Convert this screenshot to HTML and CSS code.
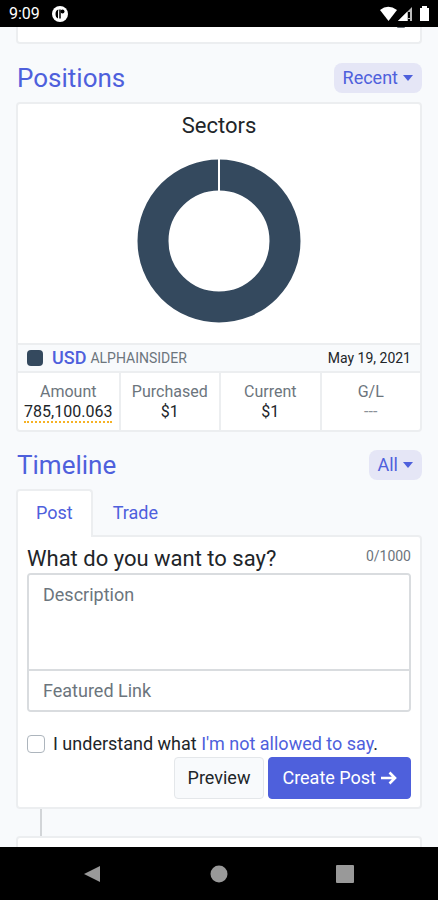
FILE: index.html
```html
<!DOCTYPE html>
<html lang="en">
<head>
<meta charset="utf-8">
<meta name="viewport" content="width=device-width, initial-scale=1">
<title>AlphaInsider</title>
<link rel="stylesheet" href="styles.css">
</head>
<body>
<header class="status">
  <time>9:09</time>
  <svg class="status-app" viewBox="0 0 16 16" aria-hidden="true"><circle cx="8" cy="8" r="8" fill="#fff"/><path d="M6.500 3.500Q3.500 4 3.500 8Q3.500 11.500 6 12.500V5.500" fill="#000"/><path d="M8 3.500V12.500" stroke="#000" stroke-width="1.500"/><circle cx="10.500" cy="5.500" r="2" fill="#000"/></svg>
  <svg class="status-icons" viewBox="0 0 50 16" aria-hidden="true"><path d="M0 4Q8-2.500 17 4L8.500 15Z" fill="#fff"/><path d="M18 15L32 1V15Z" fill="#bbb"/><path d="M18 15L27 6V15Z" fill="#fff"/><path d="M29 6V12M29 13V15" stroke="#000" stroke-width="2"/><path d="M40 2H42V0H47V2H49V15H40Z" fill="#fff"/></svg>
</header>
<main class="page">
  <section class="card card-previous"><span class="dot"></span></section>

  <div class="heading">
    <h2>Positions</h2>
    <button class="pill" type="button">Recent <span class="caret"></span></button>
  </div>
  <section class="card">
    <h3 class="chart-title">Sectors</h3>
    <svg class="chart" viewBox="0 0 164 164" role="img" aria-label="Sectors: USD 100%"><circle cx="82" cy="82" r="66" fill="none" stroke="#34495e" stroke-width="31"/><path d="M82 0V33" stroke="#fff" stroke-width="2"/></svg>
    <div class="asset">
      <span class="swatch"></span>
      <a class="symbol" href="#usd">USD</a>
      <span class="exchange">ALPHAINSIDER</span>
      <time class="date">May 19, 2021</time>
    </div>
    <dl class="stats">
      <div><dt>Amount</dt><dd><span class="hint">785,100.063</span></dd></div>
      <div><dt>Purchased</dt><dd>$1</dd></div>
      <div><dt>Current</dt><dd>$1</dd></div>
      <div><dt>G/L</dt><dd class="muted">---</dd></div>
    </dl>
  </section>

  <div class="heading">
    <h2>Timeline</h2>
    <button class="pill" type="button">All <span class="caret"></span></button>
  </div>
  <nav class="tabs">
    <a class="tab tab-active" href="#post">Post</a>
    <a class="tab" href="#trade">Trade</a>
  </nav>
  <form class="card composer">
    <div class="composer-head">
      <label for="description">What do you want to say?</label>
      <span class="counter">0/1000</span>
    </div>
    <div class="fields">
      <textarea id="description" placeholder="Description"></textarea>
      <input type="text" placeholder="Featured Link" aria-label="Featured Link">
    </div>
    <div class="agree">
      <input type="checkbox" id="agree">
      <label for="agree">I understand what <a href="#rules">I'm not allowed to say</a>.</label>
    </div>
    <div class="actions">
      <button class="btn" type="button">Preview</button>
      <button class="btn btn-primary" type="submit">Create Post
        <svg class="arrow" viewBox="0 0 16 14" aria-hidden="true"><path d="M0 7H14M8.500 1.500L14 7L8.500 12.500" fill="none" stroke="currentColor" stroke-width="2.600"/></svg>
      </button>
    </div>
  </form>
  <div class="connector"></div>
  <section class="card card-next"></section>
</main>
<footer class="navbar">
  <svg viewBox="0 0 18 18" aria-hidden="true"><path d="M1 9L17 1V17Z"/></svg>
  <svg viewBox="0 0 18 18" aria-hidden="true"><circle cx="9" cy="9" r="8.500"/></svg>
  <svg viewBox="0 0 18 18" aria-hidden="true"><rect width="18" height="18" rx="1"/></svg>
</footer>
</body>
</html>
```
FILE: styles.css
```css
* { box-sizing: border-box; }
body {
  margin: 0;
  height: 100vh;
  display: flex;
  flex-direction: column;
  background: #f8fafc;
  color: #212529;
  font-family: Roboto, sans-serif;
  font-size: 18px;
  line-height: 24px;
}
h2, h3, dl, dd { margin: 0; font-weight: 400; }
a { color: #4e60dc; text-decoration: none; }
button, input, textarea { font: inherit; margin: 0; }

.status {
  flex: none;
  height: 27px;
  padding: 0 8px 0 9px;
  display: flex;
  align-items: center;
  background: #000;
  color: #fff;
  font-size: 16px;
}
.status-app { width: 16px; height: 16px; margin-left: 12px; }
.status-icons { width: 50px; height: 16px; margin-left: auto; }

.page {
  flex: 1;
  min-height: 0;
  overflow: hidden;
  padding: 0 16px;
}
.card {
  background: #fff;
  border: 2px solid #eceef0;
  border-radius: 4px;
}
.card-previous { height: 17px; border-top: 0; border-radius: 0 0 4px 4px; }
.dot {
  display: block;
  width: 8px;
  height: 1px;
  margin: 0 15px 0 auto;
  border-radius: 0 0 4px 4px;
  background: #6c757d;
}

.heading {
  display: flex;
  align-items: center;
  justify-content: space-between;
  margin: 18px 0 9px;
  padding-left: 1px;
}
.card-previous + .heading { margin-top: 19px; }
.heading h2 { color: #4e60dc; font-size: 26px; line-height: 30px; }
.pill {
  display: flex;
  align-items: center;
  gap: 5px;
  height: 30px;
  padding: 0 9px;
  border: 0;
  border-radius: 8px;
  background: #e5e6f6;
  color: #4e60dc;
}
.caret {
  border: 5px solid transparent;
  border-top: 6px solid #4e60dc;
  border-bottom: 0;
}

.chart-title { padding-top: 8px; text-align: center; font-size: 22px; line-height: 28px; }
.chart { display: block; width: 164px; height: 164px; margin: 19px auto 20px; }
.asset {
  display: flex;
  align-items: center;
  height: 30px;
  padding: 0 9px;
  border: solid #eceef0;
  border-width: 2px 0;
  background: #f8fafc;
}
.swatch { width: 16px; height: 16px; border-radius: 4px; background: #34495e; }
.symbol { margin-left: 9px; font-weight: 500; }
.exchange { margin-left: 4px; color: #6c757d; font-size: 14px; }
.date { margin-left: auto; font-size: 14px; }
.stats { display: grid; grid-template-columns: repeat(4, 1fr); }
.stats > div { padding: 9px 0 8px; text-align: center; font-size: 16px; line-height: 20px; }
.stats > div + div { border-left: 2px solid #eceef0; }
.stats dt { color: #6c757d; }
.stats .muted { color: #8a9198; }
.hint { border-bottom: 2px dotted #f5b225; }

.tabs { display: flex; }
.tab { height: 46px; padding: 10px 18px; border: 2px solid transparent; border-bottom: 0; }
.tab-active {
  position: relative;
  height: 48px;
  margin-bottom: -2px;
  border-color: #eceef0;
  border-radius: 4px 4px 0 0;
  background: #fff;
}
.composer { padding: 8px 9px; border-top-left-radius: 0; }
.composer-head { display: flex; justify-content: space-between; font-size: 22px; line-height: 28px; }
.counter { color: #6c757d; font-size: 14px; line-height: 22px; }
.fields { border: 2px solid #d9dcdf; border-radius: 4px; overflow: hidden; }
.fields textarea, .fields input {
  display: block;
  width: 100%;
  padding: 8px 14px;
  border: 0;
  background: #fff;
  color: #212529;
}
.fields textarea { height: 96px; border-bottom: 2px solid #d9dcdf; resize: none; }
.fields input { height: 39px; }
.fields ::placeholder { color: #6c757d; opacity: 1; }
.agree { display: flex; align-items: center; gap: 8px; margin-top: 20px; }
.agree input {
  appearance: none;
  width: 18px;
  height: 18px;
  border: 1px solid #adb5bd;
  border-radius: 4px;
  background: #fff;
}
.actions { display: flex; justify-content: flex-end; gap: 4px; margin-top: 1px; }
.btn {
  display: flex;
  align-items: center;
  gap: 5px;
  height: 42px;
  padding: 0 13px;
  border: 1px solid #e4e7ea;
  border-radius: 4px;
  background: #f8fafc;
  color: #212529;
}
.btn-primary { border-color: #4e60dc; background: #4e60dc; color: #fff; }
.arrow { width: 16px; height: 14px; }
.connector { width: 2px; height: 27px; margin-left: 24px; background: #d2d5d8; }
.card-next { height: 40px; }

.navbar {
  flex: none;
  height: 53px;
  padding: 0 84px 0 83px;
  display: flex;
  align-items: center;
  justify-content: space-between;
  background: #000;
}
.navbar svg { width: 18px; height: 18px; fill: #999; }
```
